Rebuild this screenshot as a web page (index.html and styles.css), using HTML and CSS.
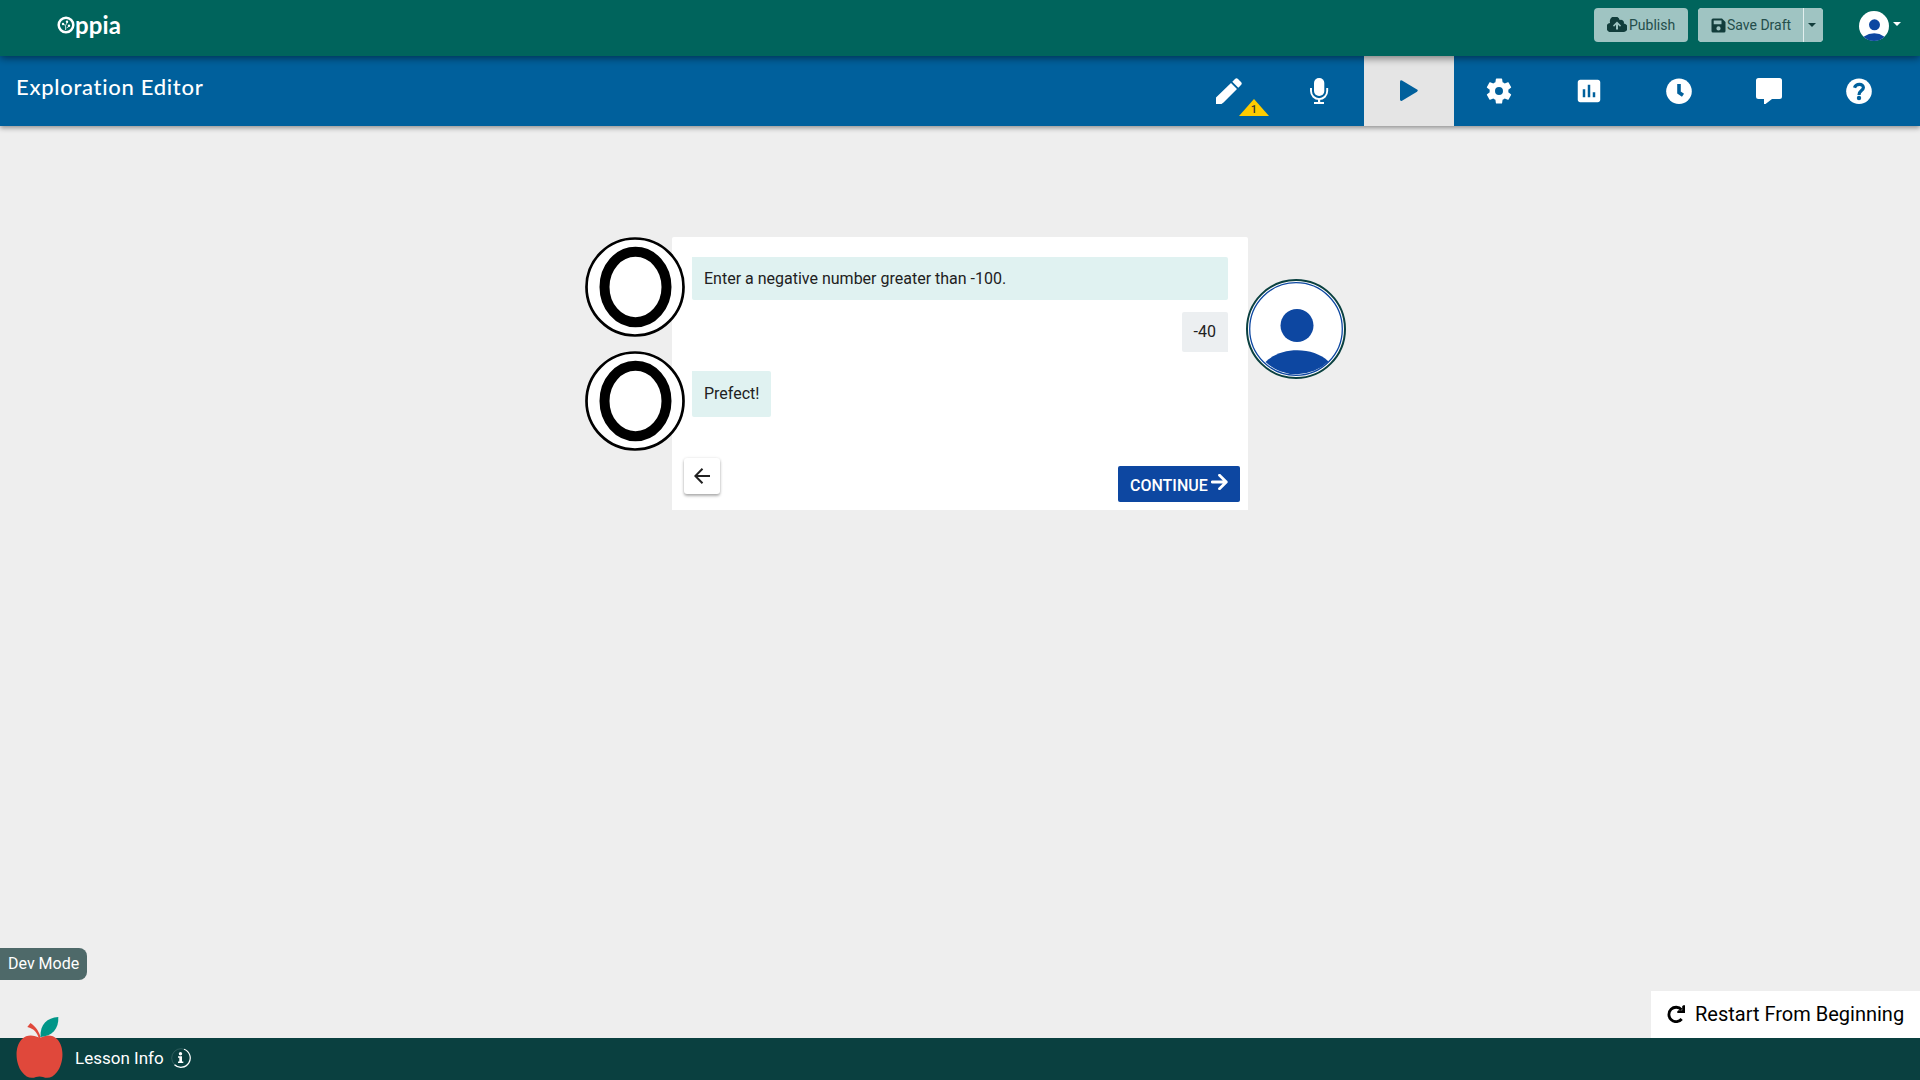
FILE: index.html
```html
<!DOCTYPE html>
<html lang="en">
<head>
<meta charset="utf-8">
<title>Exploration Editor - Oppia</title>
<link rel="stylesheet" href="styles.css">
</head>
<body>
<header class="topbar">
  <a class="logo" aria-label="Oppia">
    <svg class="logo-mark" viewBox="0 0 18 18"><circle cx="9" cy="9" r="7.3" fill="none" stroke="#fff" stroke-width="2.5"/><path d="M8.600 14V9.500L6 8M9.500 12l3-2M8.800 9l1.800-3" fill="none" stroke="#fff" stroke-width=".8"/><circle cx="6" cy="8" r="1.200" fill="#fff"/><circle cx="10" cy="5.800" r="1.200" fill="#fff"/><circle cx="12" cy="9.700" r="1.200" fill="#fff"/></svg><span class="logo-text">ppia</span>
  </a>
  <div class="actions">
    <button class="btn publish">
      <svg width="20" height="16" viewBox="0 0 20 16"><path fill="#123d3b" fill-rule="evenodd" d="M16.800 6.600A3 3 0 0 0 12.700 3 5 5 0 0 0 3 5.600V6A4.500 4.500 0 0 0 4.500 15H16a4 4 0 0 0 .8-8.400zM10 4.600l4 4-1 1.100-2-1.900V12.500H9V7.800L7 9.700 6 8.600z"/></svg><span>Publish</span>
    </button>
    <div class="group">
      <button class="btn save">
        <svg width="15" height="15" viewBox="0 0 15 15"><path fill="#123d3b" fill-rule="evenodd" d="M2 .5h9L14.500 4v9a1.500 1.500 0 0 1-1.500 1.500H2A1.500 1.500 0 0 1 .5 13V2A1.500 1.500 0 0 1 2 .5zM2.700 2.600v3.700h7.800V2.600zM7.500 8.300a2.100 2.100 0 1 0 0 4.200 2.100 2.100 0 0 0 0-4.200z"/></svg><span>Save Draft</span>
      </button>
      <button class="btn more"><i class="caret"></i></button>
    </div>
    <div class="profile">
      <svg width="30" height="30" viewBox="0 0 30 30"><circle cx="15" cy="15" r="15" fill="#fff"/><circle cx="15.500" cy="13.800" r="5.500" fill="#0d47a1"/><path d="M4.500 25.700Q15.500 19 25.500 25.700A15 15 0 0 1 4.500 25.700z" fill="#0d47a1"/></svg>
      <i class="caret light"></i>
    </div>
  </div>
</header>

<nav class="editorbar">
  <h1 class="title">Exploration Editor</h1>
  <div class="tabs">
    <a class="tab"><svg class="icon" viewBox="0 0 26 26"><path d="M0 26v-6.500L15 5l6 6L7.500 24.500 5.500 26zM16.300 3.700l2.700-2.700Q20.500-.4 22 1l3 3q1.500 1.500 0 3l-2.700 2.700z"/></svg>
      <span class="warning"><svg width="30" height="17" viewBox="0 0 30 17"><path fill="#fc0" d="M15 0l15 17H0z"/></svg><b>1</b></span></a>
    <a class="tab"><svg class="icon" viewBox="0 0 26 26"><rect x="8" y="0" width="10.300" height="18" rx="5"/><path d="M5 10v3a8.100 8.100 0 0 0 16.200 0v-3" fill="none" stroke="#fff" stroke-width="1.900"/><path d="M12 20.500h2.200V24H18v2H8v-2h4z"/></svg></a>
    <a class="tab active"><svg class="icon" viewBox="0 0 26 26"><path d="M4 3.500Q4.300 1.600 6 2.500l15 9q1.700 1.100 0 2.200l-15 9Q4.300 23.500 4 21.800z"/></svg></a>
    <a class="tab"><svg class="icon large" viewBox="0 0 24 24"><path d="M19.430 12.980c.04-.32.07-.64.07-.98s-.03-.66-.07-.98l2.110-1.650c.19-.15.24-.42.12-.64l-2-3.460c-.12-.22-.39-.3-.61-.22l-2.490 1c-.52-.4-1.080-.73-1.690-.98l-.38-2.650C14.460 2.180 14.250 2 14 2h-4c-.25 0-.46.18-.49.42l-.38 2.650c-.61.25-1.170.59-1.690.98l-2.490-1c-.23-.09-.49 0-.61.22l-2 3.460c-.13.22-.07.49.12.64l2.110 1.650c-.04.32-.07.65-.07.98s.03.66.07.98l-2.110 1.650c-.19.15-.24.42-.12.64l2 3.460c.12.22.39.3.61.22l2.490-1c.52.4 1.080.73 1.690.98l.38 2.650c.03.24.24.42.49.42h4c.25 0 .46-.18.49-.42l.38-2.650c.61-.25 1.170-.59 1.690-.98l2.490 1c.23.09.49 0 .61-.22l2-3.460c.12-.22.07-.49-.12-.64l-2.110-1.650zM12 15.200a3.200 3.200 0 1 1 0-6.400 3.200 3.200 0 0 1 0 6.400z"/></svg></a>
    <a class="tab"><svg class="icon large" viewBox="0 0 24 24"><path d="M19 3H5c-1.100 0-2 .9-2 2v14c0 1.100.9 2 2 2h14c1.100 0 2-.9 2-2V5c0-1.100-.9-2-2-2zM9 17H7v-6.500h2V17zm4 0h-2V7h2v10zm4 0h-2v-4h2v4z"/></svg></a>
    <a class="tab"><svg class="icon" viewBox="0 0 26 26"><circle cx="13" cy="13.200" r="12.800"/><path d="M13 6v8.500l4 2.800" fill="none" stroke="#00609c" stroke-width="3.600"/></svg></a>
    <a class="tab"><svg class="icon" viewBox="0 0 26 26"><path d="M2.500 0h21Q26 0 26 2.500v16q0 2.500-2.500 2.500H16l-6.500 5H8v-5H2.500Q0 21 0 18.500v-16Q0 0 2.500 0z"/></svg></a>
    <a class="tab"><svg class="icon" viewBox="0 0 26 26"><circle cx="13" cy="13.200" r="12.800"/><path d="M8.500 9.700C10 5 17.500 5.300 17.400 9.700 17.200 12.800 13 12.500 13 17" fill="none" stroke="#00609c" stroke-width="3.200"/><circle cx="13" cy="20" r="2.200" fill="#00609c"/></svg></a>
  </div>
</nav>

<main class="stage">
  <section class="card">
    <div class="row tutor">
      <svg class="avatar" viewBox="0 0 100 100"><circle cx="50" cy="50" r="48.500" fill="#fff" stroke="#000" stroke-width="2.700"/><ellipse cx="50.500" cy="50" rx="31" ry="35.200" fill="none" stroke="#000" stroke-width="10"/></svg>
      <p class="bubble question">Enter a negative number greater than -100.</p>
    </div>
    <div class="row learner">
      <p class="bubble answer">-40</p>
      <svg class="avatar" viewBox="0 0 100 100"><circle cx="50" cy="50" r="49" fill="#fff" stroke="#0a4040" stroke-width="2"/><circle cx="50" cy="50" r="46.300" fill="#fff" stroke="#0d47a1" stroke-width="1.300"/><circle cx="51" cy="46.500" r="16.500" fill="#0d47a1"/><path d="M19.500 83C35 67.500 67 67.500 82.500 82.500A46 46 0 0 1 19.500 83z" fill="#0d47a1"/></svg>
    </div>
    <div class="row tutor">
      <svg class="avatar" viewBox="0 0 100 100"><circle cx="50" cy="50" r="48.500" fill="#fff" stroke="#000" stroke-width="2.700"/><ellipse cx="50.500" cy="50" rx="31" ry="35.200" fill="none" stroke="#000" stroke-width="10"/></svg>
      <p class="bubble feedback">Prefect!</p>
    </div>
    <div class="card-nav">
      <button class="back" aria-label="Back"><svg width="16" height="16" viewBox="0 0 16 16"><path d="M16 8H1.500M8.500.8L1.300 8l7.200 7.200" fill="none" stroke="#212121" stroke-width="2"/></svg></button>
      <button class="continue">CONTINUE<svg width="17" height="16" viewBox="0 0 17 16"><path d="M1.200 8h14M8.500 1.200L15.300 8l-6.800 6.800" fill="none" stroke="#fff" stroke-width="2.800" stroke-linecap="round" stroke-linejoin="round"/></svg></button>
    </div>
  </section>
  <div class="dev-mode">Dev Mode</div>
  <button class="restart"><svg width="18" height="18" viewBox="0 0 18 18"><path d="M14.500 4.700A7.200 7.200 0 1 0 14.700 14" fill="none" stroke="#000" stroke-width="2.800"/><path d="M18 .3V8h-7.700V6.300l1.200-1.100h3.700V1.300L16.300.3z"/></svg>Restart From Beginning</button>
</main>

<footer class="footer">
  <svg class="apple" viewBox="0 0 47 61"><path fill="#e0483b" d="M24 21C18 18 11 17 6 22-2 30-.5 47 6 55c4 5.500 9 7 14 5q3.500-1.200 7 0c5 2 10 .5 14-5 6.500-8 8-25 0-33-5-5-12-4-17-1z"/><path fill="#e0483b" d="M14.500 6L11.300 10C18 11.500 21.500 16 23 22h1.800C24 15.500 20 10 14.500 6z"/><path fill="#e0483b" d="M22.500 21.500h2.500v2h-2.500z"/><path fill="#009688" d="M24.500 20C24 7 31 1 42.300 0 43 12 36 19 24.500 20z"/><path d="M24.500 20Q31 13 36 7" fill="none" stroke="#0a887c" stroke-width=".5"/></svg>
  <span>Lesson Info</span>
  <svg class="info" viewBox="0 0 20 20"><circle cx="10" cy="10" r="9.300" fill="none" stroke="#fff" stroke-opacity=".25" stroke-width=".6"/><path d="M13 1.200A9.300 9.300 0 1 1 3.500 16.700" fill="none" stroke="#fff" stroke-width="1.200"/><circle cx="9.500" cy="5.700" r="1.700" fill="#fff"/><path d="M7 8.300h4v5.200h1.300V15H7v-1.500h1.300V9.800H7z" fill="#fff"/></svg>
</footer>
</body>
</html>
```

FILE: styles.css
```css
* { box-sizing: border-box; }
body {
  margin: 0;
  height: 1080px;
  display: flex;
  flex-direction: column;
  overflow: hidden;
  background: #eee;
  color: #212121;
  font: 16px/24px Roboto, sans-serif;
}
button { border: 0; padding: 0; font: inherit; }
svg { display: block; flex: none; }
p, h1 { margin: 0; }

.topbar {
  height: 56px;
  flex: none;
  display: flex;
  justify-content: space-between;
  padding: 8px 19px 0 57px;
  background: #00645c;
  box-shadow: 0 2px 8px rgba(0, 0, 0, .5);
  position: relative;
  z-index: 2;
}
.logo { display: flex; padding-top: 8px; color: #fff; }
.logo-mark { width: 18px; height: 18px; }
.logo-text { font: bold 24px/24px Lato, sans-serif; margin-top: -3px; letter-spacing: .1px; }
.actions { display: flex; align-items: flex-start; }
.btn {
  height: 34px;
  display: flex;
  align-items: center;
  border-radius: 4px;
  background: #9fc4c2;
  color: #244e4b;
  font-size: 14px;
}
.publish { width: 94px; padding-left: 13px; gap: 2px; margin-right: 10px; }
.group { display: flex; gap: 1px; border-radius: 4px; background: #e2efee; }
.save { width: 105px; padding-left: 13px; gap: 1px; border-radius: 4px 0 0 4px; }
.more { width: 19px; justify-content: center; border-radius: 0 4px 4px 0; padding-right: 3px; }
.caret { border: 4px solid transparent; border-top-color: #123d3b; border-bottom: 0; }
.light { border-top-color: #fff; margin-top: -4px; }
.profile { display: flex; align-items: center; gap: 4px; margin: 3px 0 0 36px; }

.editorbar {
  height: 70px;
  flex: none;
  display: flex;
  justify-content: space-between;
  padding: 0 16px 0 16px;
  background: #00609c;
  box-shadow: 0 2px 5px rgba(0, 0, 0, .4);
  position: relative;
  z-index: 1;
}
.title { padding-top: 16px; color: #fff; font: 500 22px/30px Lato, sans-serif; letter-spacing: .7px; }
.tabs { display: flex; }
.tab { width: 90px; height: 70px; display: flex; align-items: center; justify-content: center; position: relative; }
.active { background: #e5e5e5; }
.icon { width: 26px; height: 26px; fill: #fff; }
.active .icon { fill: #00609c; }
.large { width: 30px; height: 30px; }
.warning { position: absolute; left: 55px; top: 43px; width: 30px; height: 17px; }
.warning b { position: absolute; inset: 4px 0 0; text-align: center; color: #333; font: 500 11px/13px Roboto, sans-serif; }

.stage { flex: 1; padding-top: 111px; position: relative; }
.card { width: 576px; height: 273px; margin: 0 auto; padding: 20px 8px 8px 12px; background: #fff; border-radius: 2px 2px 0 0; display: flex; flex-direction: column; }
.row { display: flex; position: relative; margin: 0 12px 12px 8px; }
.learner { justify-content: flex-end; margin-bottom: 19px; }
.bubble { padding: 10px 12px 0; border-radius: 0 2px 2px 2px; background: #e0f2f1; }
.question { flex: 1; height: 43px; }
.answer { height: 40px; padding-top: 8px; border-radius: 2px 2px 0 2px; background: #eceff1; }
.feedback { height: 46px; padding-top: 11px; }
.avatar { position: absolute; width: 100px; height: 100px; }
.tutor .avatar { left: -107px; top: -20px; }
.learner .avatar { left: 554px; top: -33px; }
.card-nav { margin-top: auto; display: flex; justify-content: space-between; align-items: flex-end; }
.back { width: 36px; height: 36px; margin-bottom: 8px; display: grid; place-items: center; background: #fff; border-radius: 3px; box-shadow: 0 2px 3px rgba(0, 0, 0, .3), 0 0 3px rgba(0, 0, 0, .1); }
.continue { width: 122px; height: 36px; padding: 3px 12px 0; display: flex; align-items: center; justify-content: space-between; background: #0d47a1; border-radius: 2px; color: #fff; font-weight: 500; }
.continue svg { margin-top: -7px; }

.dev-mode { position: absolute; left: 0; bottom: 58px; width: 87px; height: 32px; padding: 4px 0 4px 8px; border-radius: 0 8px 8px 0; background: #4e6969; color: #fff; white-space: nowrap; }
.restart { position: absolute; right: 0; bottom: 0; width: 269px; height: 47px; padding: 0 0 2px 16px; display: flex; align-items: center; gap: 10px; background: #fff; color: #000; font-size: 20px; white-space: nowrap; }

.footer { height: 42px; flex: none; display: flex; align-items: center; padding-left: 75px; gap: 7px; background: #0a4040; color: #fff; font-size: 17px; position: relative; }
.footer span { margin-top: -2px; }
.apple { position: absolute; left: 16px; top: -21px; width: 47px; height: 61px; }
.info { width: 20px; height: 20px; margin-top: -2px; }
```
